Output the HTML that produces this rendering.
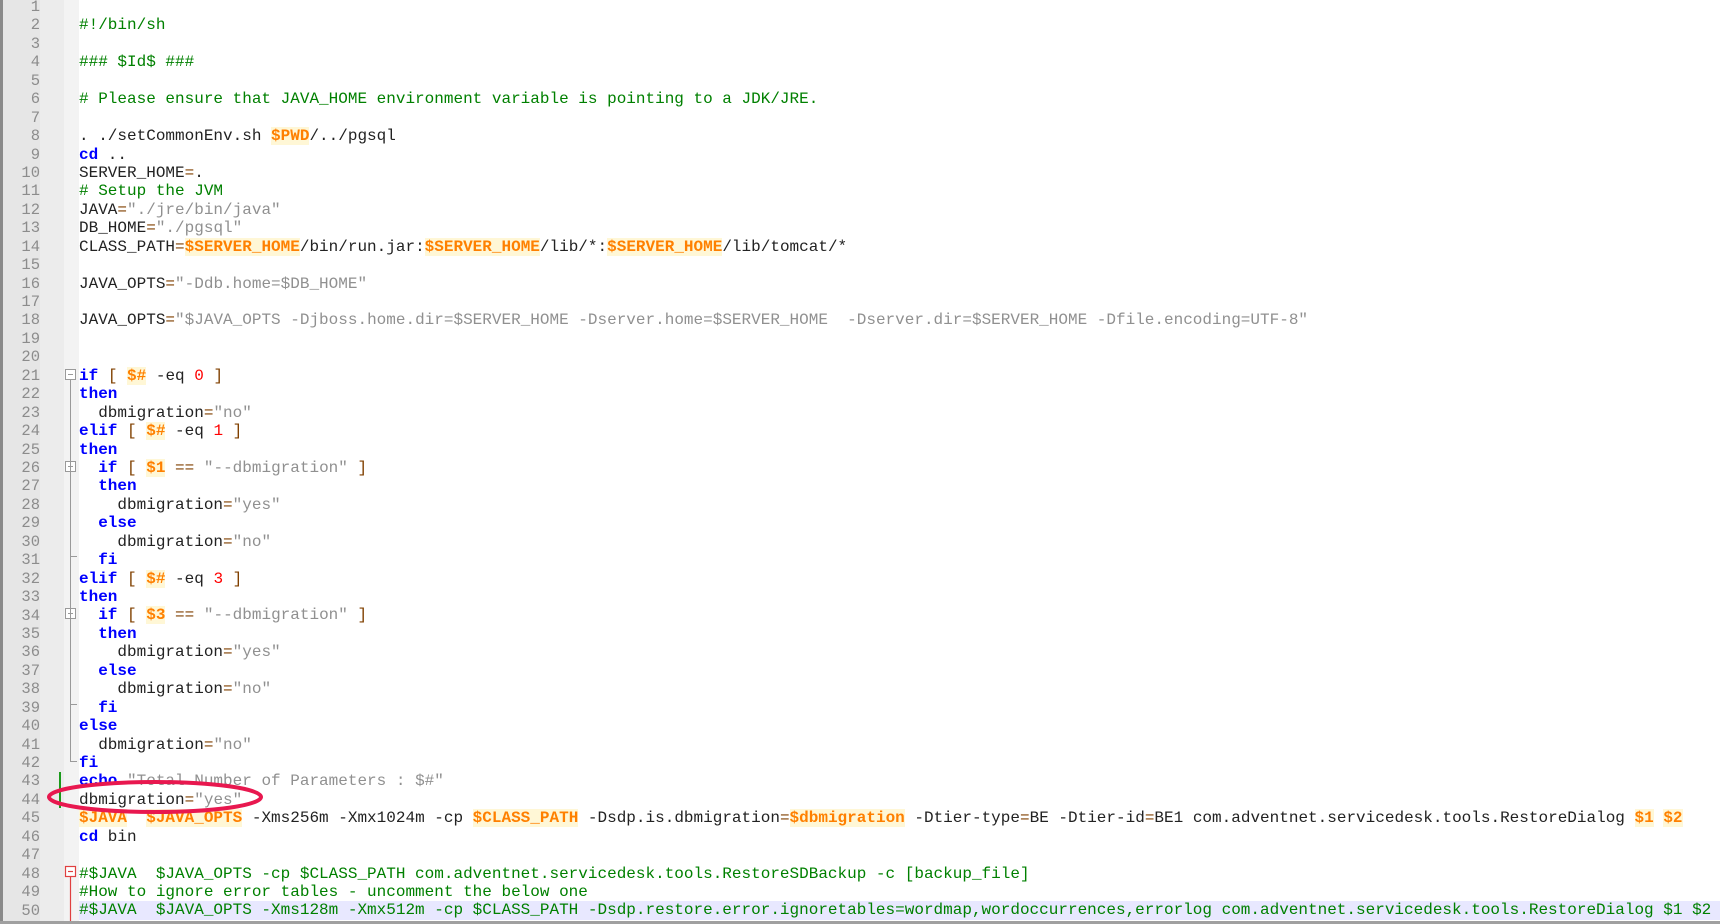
<!DOCTYPE html>
<html><head><meta charset="utf-8"><style>
html,body{margin:0;padding:0;width:1720px;height:924px;overflow:hidden;background:#fff}
#g{position:absolute;left:0;top:0;width:64px;height:921px;background:#e6e6e6;border-left:3px solid #8a8a8a;box-sizing:border-box}
#g2{position:absolute;left:40px;top:0;width:24px;height:921px;background:#ececec}
#f{position:absolute;left:64px;top:0;width:15px;height:921px;background:#f3f3f3}
#bot{position:absolute;left:0;top:921px;width:1720px;height:3px;background:#a0a0a0}
.ln{position:absolute;left:0;width:40px;text-align:right;font:15.5px "Liberation Mono",monospace;color:#8c8c8c}
#code{position:absolute;left:79px;top:-2px;font:16px/18.44px "Liberation Mono",monospace;color:#222;white-space:pre;margin:0}
.k{color:#0000ff;font-weight:bold}
.c{color:#008000}
.s{color:#909090}
.v{color:#ff8000;font-weight:bold;background:#fff7d6}
.o{color:#804000}
.n{color:#ff0000}
.hl{background:#e8e8ff;display:inline-block;width:1641px}
</style></head><body>
<div id="g"></div><div id="g2"></div><div id="f"></div>
<div id="nums"></div>
<pre id="code">

<span class="c">#!/bin/sh</span>

<span class="c">### $Id$ ###</span>

<span class="c"># Please ensure that JAVA_HOME environment variable is pointing to a JDK/JRE.</span>

. ./setCommonEnv.sh <span class="v">$PWD</span>/../pgsql
<span class="k">cd</span> ..
SERVER_HOME<span class="o">=</span>.
<span class="c"># Setup the JVM</span>
JAVA<span class="o">=</span><span class="s">"./jre/bin/java"</span>
DB_HOME<span class="o">=</span><span class="s">"./pgsql"</span>
CLASS_PATH<span class="o">=</span><span class="v">$SERVER_HOME</span>/bin/run.jar:<span class="v">$SERVER_HOME</span>/lib/*:<span class="v">$SERVER_HOME</span>/lib/tomcat/*

JAVA_OPTS<span class="o">=</span><span class="s">"-Ddb.home=$DB_HOME"</span>

JAVA_OPTS<span class="o">=</span><span class="s">"$JAVA_OPTS -Djboss.home.dir=$SERVER_HOME -Dserver.home=$SERVER_HOME  -Dserver.dir=$SERVER_HOME -Dfile.encoding=UTF-8"</span>


<span class="k">if</span> <span class="o">[</span> <span class="v">$#</span> -eq <span class="n">0</span> <span class="o">]</span>
<span class="k">then</span>
  dbmigration<span class="o">=</span><span class="s">"no"</span>
<span class="k">elif</span> <span class="o">[</span> <span class="v">$#</span> -eq <span class="n">1</span> <span class="o">]</span>
<span class="k">then</span>
  <span class="k">if</span> <span class="o">[</span> <span class="v">$1</span> <span class="o">==</span> <span class="s">"--dbmigration"</span> <span class="o">]</span>
  <span class="k">then</span>
    dbmigration<span class="o">=</span><span class="s">"yes"</span>
  <span class="k">else</span>
    dbmigration<span class="o">=</span><span class="s">"no"</span>
  <span class="k">fi</span>
<span class="k">elif</span> <span class="o">[</span> <span class="v">$#</span> -eq <span class="n">3</span> <span class="o">]</span>
<span class="k">then</span>
  <span class="k">if</span> <span class="o">[</span> <span class="v">$3</span> <span class="o">==</span> <span class="s">"--dbmigration"</span> <span class="o">]</span>
  <span class="k">then</span>
    dbmigration<span class="o">=</span><span class="s">"yes"</span>
  <span class="k">else</span>
    dbmigration<span class="o">=</span><span class="s">"no"</span>
  <span class="k">fi</span>
<span class="k">else</span>
  dbmigration<span class="o">=</span><span class="s">"no"</span>
<span class="k">fi</span>
<span class="k">echo</span> <span class="s">"Total Number of Parameters : $#"</span>
dbmigration<span class="o">=</span><span class="s">"yes"</span>
<span class="v">$JAVA</span>  <span class="v">$JAVA_OPTS</span> -Xms256m -Xmx1024m -cp <span class="v">$CLASS_PATH</span> -Dsdp.is.dbmigration<span class="o">=</span><span class="v">$dbmigration</span> -Dtier-type<span class="o">=</span>BE -Dtier-id<span class="o">=</span>BE1 com.adventnet.servicedesk.tools.RestoreDialog <span class="v">$1</span> <span class="v">$2</span>
<span class="k">cd</span> bin

<span class="c">#$JAVA  $JAVA_OPTS -cp $CLASS_PATH com.adventnet.servicedesk.tools.RestoreSDBackup -c [backup_file]</span>
<span class="c">#How to ignore error tables - uncomment the below one</span>
<span class="hl"><span class="c">#$JAVA  $JAVA_OPTS -Xms128m -Xmx512m -cp $CLASS_PATH -Dsdp.restore.error.ignoretables=wordmap,wordoccurrences,errorlog com.adventnet.servicedesk.tools.RestoreDialog $1 $2</span></span></pre>
<svg width="1720" height="924" style="position:absolute;left:0;top:0" xmlns="http://www.w3.org/2000/svg">
<g fill="#fff" stroke="#9a9a9a" stroke-width="1">
<rect x="65.5" y="369.5" width="10" height="10"/><line x1="68" y1="374.5" x2="73" y2="374.5"/>
<rect x="65.5" y="461.5" width="10" height="10"/><line x1="68" y1="466.5" x2="73" y2="466.5"/>
<rect x="65.5" y="608.5" width="10" height="10"/><line x1="68" y1="613.5" x2="73" y2="613.5"/>
<line x1="70.5" y1="380" x2="70.5" y2="762"/><line x1="70.5" y1="761.5" x2="77" y2="761.5"/>
<line x1="70.5" y1="556.5" x2="77" y2="556.5"/><line x1="70.5" y1="704.5" x2="77" y2="704.5"/>
</g>
<g fill="#fff" stroke="#e04040" stroke-width="1.2">
<rect x="65.5" y="866.5" width="10" height="10"/><line x1="68" y1="871.5" x2="73" y2="871.5"/>
<line x1="70.5" y1="877" x2="70.5" y2="921"/>
</g>
<rect x="59" y="772" width="2" height="36" fill="#1a9a1a"/>
<ellipse cx="155" cy="797" rx="106" ry="15" fill="none" stroke="#e8184f" stroke-width="4"/>
</svg>
<div id="bot"></div>
<script>
var h='';for(var i=1;i<=50;i++){h+='<div class="ln" style="top:'+(-2+(i-1)*18.44)+'px;line-height:18.44px">'+i+'</div>';}
document.getElementById('nums').innerHTML=h;
</script>
</body></html>
